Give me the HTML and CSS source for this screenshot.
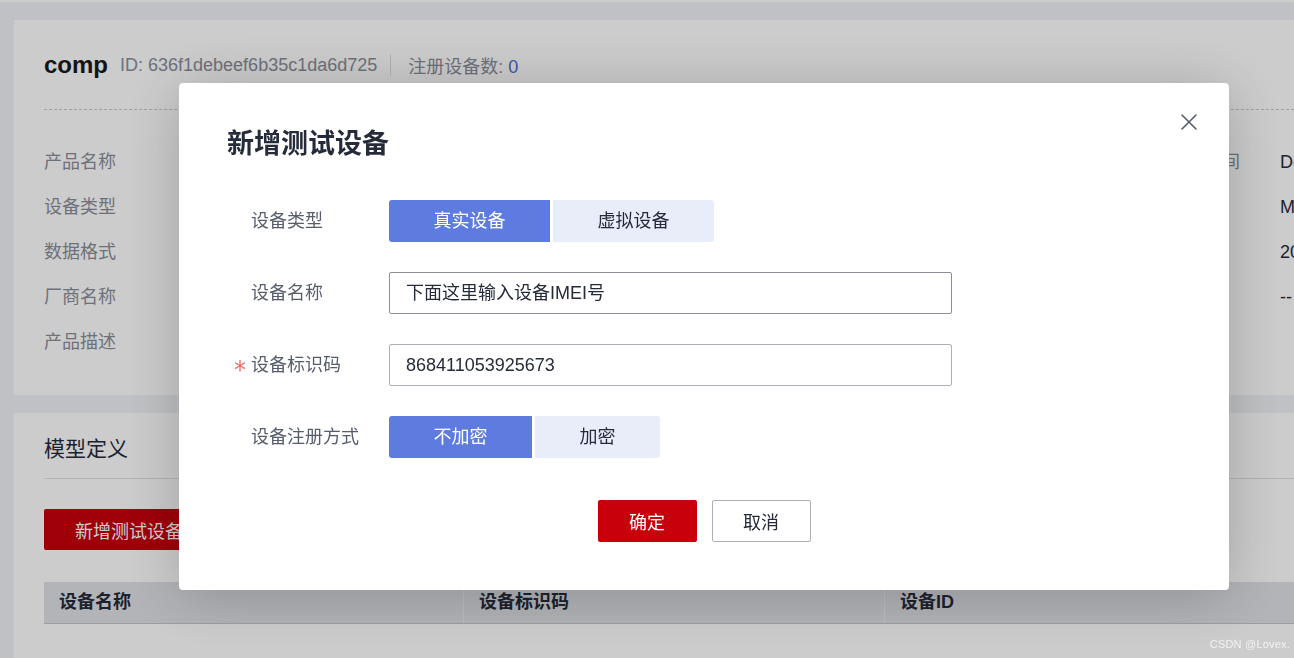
FILE: index.html
```html
<!DOCTYPE html>
<html lang="zh-CN">
<head>
<meta charset="utf-8">
<title>新增测试设备</title>
<link rel="stylesheet" href="styles.css">
</head>
<body>
<div class="topbar"></div>
<div class="page">
  <section class="card card-info">
    <div class="head">
      <span class="prod-name">comp</span>
      <span class="prod-id">ID: 636f1debeef6b35c1da6d725</span>
      <span class="sep"></span>
      <span class="reg">注册设备数: <span class="num">0</span></span>
    </div>
    <div class="info-grid">
      <div class="pair"><span class="lbl">产品名称</span><span class="val">comp</span></div>
      <span class="lbl">所属资源空间</span><span class="val">DefaultApp_comp</span>
      <div class="pair"><span class="lbl">设备类型</span><span class="val">default</span></div>
      <span class="lbl">协议类型</span><span class="val">MQTT</span>
      <div class="pair"><span class="lbl">数据格式</span><span class="val">JSON</span></div>
      <span class="lbl">创建时间</span><span class="val">2022/11/12 20:13:41</span>
      <div class="pair"><span class="lbl">厂商名称</span><span class="val">--</span></div>
      <span class="lbl">所属行业</span><span class="val">--</span>
      <div class="pair"><span class="lbl">产品描述</span><span class="val">--</span></div>
      <span></span><span></span>
    </div>
  </section>
  <section class="card card-model">
    <h2 class="model-title">模型定义</h2>
    <div class="model-actions"><button class="btn-red-dark">新增测试设备</button></div>
    <div class="table-head">
      <div class="th">设备名称</div>
      <div class="th">设备标识码</div>
      <div class="th">设备ID</div>
    </div>
  </section>
</div>

<div class="mask"></div>

<div class="modal">
  <button class="close" aria-label="关闭">
    <svg width="16" height="16" viewBox="0 0 16 16"><path d="M1 1 L15 15 M15 1 L1 15" stroke="#575d6c" stroke-width="1.6" fill="none" stroke-linecap="round"/></svg>
  </button>
  <h1 class="modal-title">新增测试设备</h1>
  <div class="form">
    <div class="row">
      <div class="label"><span class="star"></span>设备类型</div>
      <div class="seg">
        <span class="seg-item active">真实设备</span>
        <span class="seg-item">虚拟设备</span>
      </div>
    </div>
    <div class="row">
      <div class="label"><span class="star"></span>设备名称</div>
      <div class="input hover">下面这里输入设备IMEI号</div>
    </div>
    <div class="row">
      <div class="label"><span class="star">*</span>设备标识码</div>
      <div class="input">868411053925673</div>
    </div>
    <div class="row">
      <div class="label"><span class="star"></span>设备注册方式</div>
      <div class="seg">
        <span class="seg-item active">不加密</span>
        <span class="seg-item">加密</span>
      </div>
    </div>
  </div>
  <div class="footer">
    <button class="btn-ok">确定</button>
    <button class="btn-cancel">取消</button>
  </div>
</div>

<div class="watermark">CSDN @Lovex.</div>
</body>
</html>
```
FILE: styles.css
```css
html, body {
  margin: 0;
  padding: 0;
  width: 1294px;
  height: 658px;
  overflow: hidden;
  background: #f0f2f5;
  font-family: "Liberation Sans", "Noto Sans CJK SC", sans-serif;
  font-size: 18px;
  color: #252b3a;
}

.topbar {
  height: 2px;
  background: #fff;
}

.page {
  padding: 18px 0 0 14px;
  display: flex;
  flex-direction: column;
  gap: 18px;
}

.card {
  background: #fff;
  width: 1360px;
  box-sizing: border-box;
  padding-left: 30px;
}

.card-info {
  height: 375px;
  padding-top: 29px;
}

.head {
  display: flex;
  align-items: center;
  height: 32px;
  width: 1300px;
  padding-bottom: 28px;
  border-bottom: 1px dashed #c8cad0;
}

.prod-name {
  font-size: 24px;
  font-weight: bold;
  color: #191919;
  margin-right: 12px;
}

.prod-id {
  color: #8a8e99;
}

.sep {
  width: 1px;
  height: 22px;
  background: #dfe1e6;
  margin: 0 17px 0 13px;
}

.reg {
  color: #8a8e99;
}

.num {
  color: #526ecc;
}

.info-grid {
  display: grid;
  grid-template-columns: 1088px 148px auto;
  grid-auto-rows: 45px;
  margin-top: 30px;
  line-height: 45px;
  white-space: nowrap;
}

.pair {
  display: flex;
}

.pair .lbl {
  width: 140px;
}

.lbl {
  color: #8a8e99;
}

.val {
  color: #252b3a;
}

.card-model {
  height: 300px;
  padding-top: 21px;
}

.model-title {
  margin: 0;
  width: 1300px;
  font-size: 21px;
  font-weight: normal;
  line-height: 30px;
  color: #252b3a;
  padding-bottom: 14px;
  border-bottom: 1px solid #dfe1e6;
}

.model-actions {
  margin-top: 30px;
}

.btn-red-dark {
  height: 41px;
  padding: 0 31px;
  border: none;
  border-radius: 2px;
  background: #c7000b;
  color: #fff;
  font: inherit;
}

.table-head {
  margin-top: 32px;
  width: 1300px;
  display: grid;
  grid-template-columns: 419px 421px 1fr;
  background: #dfe1e6;
  border-bottom: 1px solid #c2c5cc;
}

.th {
  height: 41px;
  line-height: 41px;
  padding-left: 15px;
  font-weight: bold;
  color: #252b3a;
  border-left: 1px solid #eceef2;
}

.th:first-child {
  border-left: none;
}

.mask {
  position: fixed;
  inset: 0;
  background: rgba(0, 0, 0, 0.2);
}

.modal {
  position: fixed;
  left: 179px;
  top: 83px;
  width: 1050px;
  height: 507px;
  box-sizing: border-box;
  padding: 43px 48px 0 48px;
  background: #fff;
  border-radius: 4px;
  box-shadow: 0 6px 60px rgba(0, 0, 0, 0.22);
}

.close {
  position: absolute;
  top: 31px;
  right: 32px;
  width: 16px;
  height: 16px;
  padding: 0;
  border: none;
  background: none;
  display: flex;
}

.modal-title {
  margin: 0 0 38px 0;
  font-size: 27px;
  line-height: 36px;
  font-weight: bold;
  color: #252b3a;
}

.form {
  display: flex;
  flex-direction: column;
  gap: 30px;
}

.row {
  display: flex;
  align-items: center;
  height: 42px;
}

.label {
  width: 162px;
  display: flex;
  align-items: center;
  color: #575d6c;
  line-height: 24px;
}

.star {
  width: 24px;
  box-sizing: border-box;
  padding-right: 5px;
  text-align: right;
  color: #f66f6a;
  font-family: "DejaVu Sans", sans-serif;
  font-size: 24px;
  line-height: 24px;
  position: relative;
  top: 5px;
}

.seg {
  display: flex;
  gap: 3px;
  height: 42px;
}

.seg-item {
  padding: 0 44.5px;
  line-height: 42px;
  background: #e9edfa;
  color: #252b3a;
}

.seg-item:first-child {
  border-radius: 3px 0 0 3px;
}

.seg-item:last-child {
  border-radius: 0 3px 3px 0;
}

.seg-item.active {
  background: #5e7ce0;
  color: #fff;
}

.input {
  width: 563px;
  height: 42px;
  box-sizing: border-box;
  border: 1px solid #adb0b8;
  border-radius: 2px;
  padding-left: 16px;
  line-height: 40px;
  color: #252b3a;
}

.input.hover {
  border-color: #8a8e99;
}

.footer {
  margin-top: 42px;
  display: flex;
  justify-content: center;
  gap: 15px;
}

.btn-ok,
.btn-cancel {
  width: 99px;
  height: 42px;
  border-radius: 2px;
  font: inherit;
  padding: 0;
}

.btn-ok {
  border: none;
  background: #c7000b;
  color: #fff;
}

.btn-cancel {
  border: 1px solid #adb0b8;
  background: #fff;
  color: #252b3a;
}

.watermark {
  position: fixed;
  right: 4px;
  bottom: 8px;
  font-size: 11px;
  color: #f2f2f2;
  letter-spacing: 0.2px;
}
```
